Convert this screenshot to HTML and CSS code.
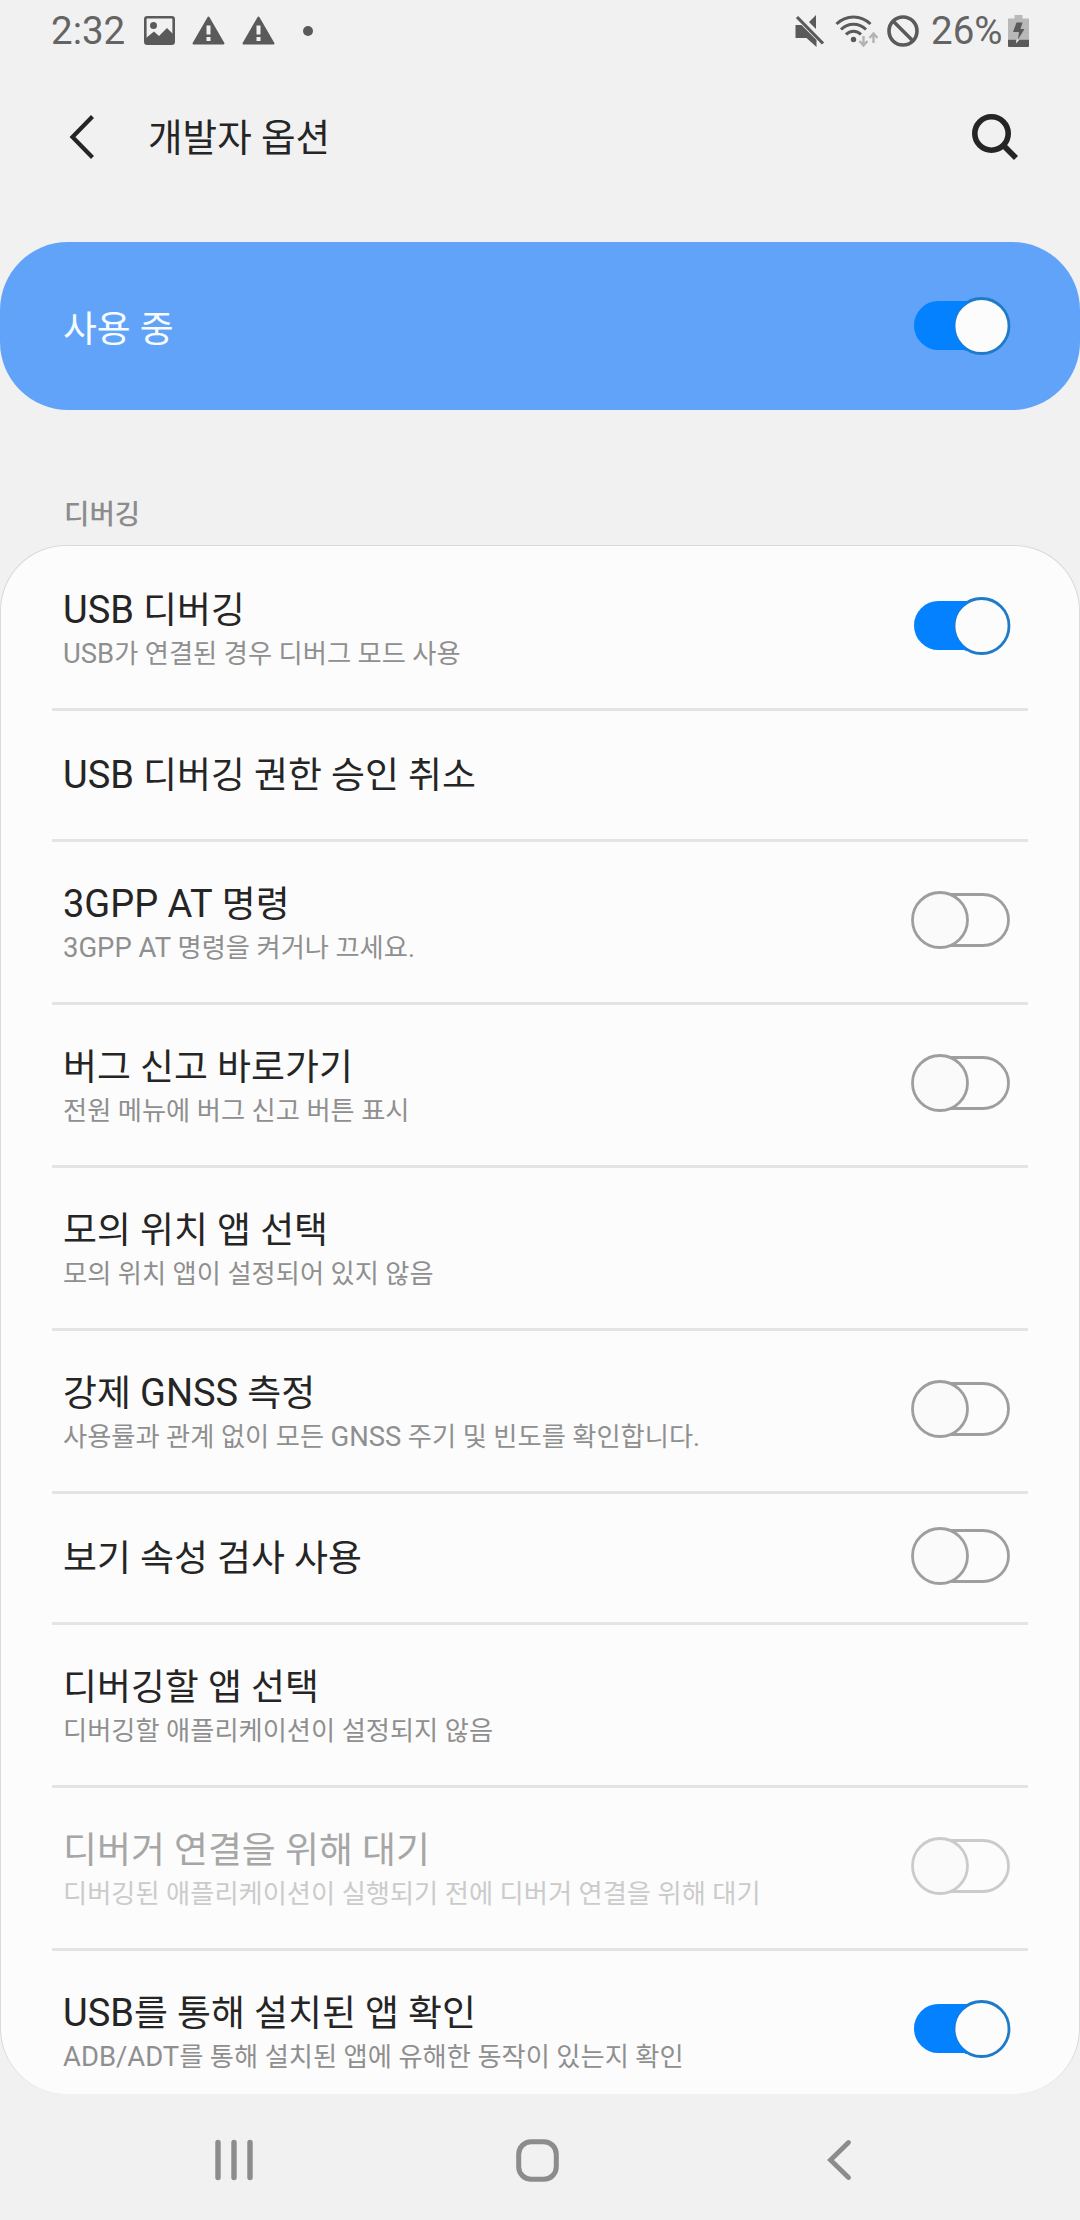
FILE: index.html
```html
<!DOCTYPE html>
<html lang="ko">
<head>
<meta charset="utf-8">
<title>개발자 옵션</title>
<link rel="stylesheet" href="styles.css">
</head>
<body>
<svg class="defs" width="0" height="0" aria-hidden="true">
  <symbol id="switch-on" viewBox="0 0 100 58">
    <rect x="3" y="4" width="90" height="49" rx="24.500" fill="#0381fe"/>
    <circle cx="70.500" cy="29" r="27.500" fill="#fcfcfc" stroke="#1f7bc8" stroke-width="2.800"/>
    <path d="M56 5 A27.500 27.500 0 0 0 56 53" fill="none" stroke="#0381fe" stroke-width="3"/>
  </symbol>
  <symbol id="switch-off" viewBox="0 0 100 58">
    <rect x="8" y="3.500" width="89.500" height="51" rx="25.500" fill="#fcfcfc" stroke="currentColor" stroke-width="2.800"/>
    <circle cx="29" cy="29" r="27.500" fill="#fafafa" stroke="currentColor" stroke-width="2.800"/>
  </symbol>
  <symbol id="warning" viewBox="0 0 33 29">
    <path d="M16.500 1.500 31.500 27.500H1.500Z" fill="#5a5a5a" stroke="#5a5a5a" stroke-width="2" stroke-linejoin="round"/>
    <path d="M14.500 9.500h4v9h-4zM14.500 21h4v4h-4z" fill="#f1f1f1"/>
  </symbol>
</svg>

<header class="status">
  <div class="status-side">
    <span class="clock">2:32</span>
    <svg width="31" height="29" viewBox="0 0 31 29">
      <rect x="1.300" y="1.300" width="28.400" height="26.400" rx="2" fill="none" stroke="#5a5a5a" stroke-width="2.600"/>
      <circle cx="9.500" cy="9.500" r="3.500" fill="#5a5a5a"/>
      <path d="M2 22 10 15.500 15 20 23 12 29 18V28H2Z" fill="#5a5a5a"/>
    </svg>
    <svg class="warn" width="33" height="29"><use href="#warning"/></svg>
    <svg class="warn" width="33" height="29"><use href="#warning"/></svg>
    <span class="dot"></span>
  </div>
  <div class="status-side">
    <svg width="30" height="32" viewBox="0 0 30 32">
      <path d="M0.500 10h6l15 15v7l-10-9h-11zM14 7l7-7v14z" fill="#5a5a5a"/>
      <path d="M4 0 30 26.500" stroke="#f1f1f1" stroke-width="2.500"/>
      <path d="M2 2 28 28.500" stroke="#5a5a5a" stroke-width="3.200"/>
    </svg>
    <svg class="wifi" width="43" height="34" viewBox="0 0 43 34">
      <g fill="none" stroke="#5a5a5a" stroke-width="3">
        <path d="M1.500 10C11 .5 26 .5 35.500 10"/>
        <path d="M6 15.500C13 8.500 24 8.500 31 15.500"/>
        <path d="M11 20.500C15 16 22 16 26 20.500"/>
      </g>
      <circle cx="18.500" cy="25.500" r="2.700" fill="#5a5a5a"/>
      <g fill="none" stroke="#b3b3b3" stroke-width="2.400">
        <path d="M28.500 22v9M24.500 27l4 4.500 4-4.500"/>
        <path d="M38.500 29v-9M34.500 24l4-4.500 4 4.500"/>
      </g>
    </svg>
    <svg class="no-signal" width="32" height="32" viewBox="0 0 32 32">
      <circle cx="16" cy="16" r="14" fill="none" stroke="#5a5a5a" stroke-width="3.600"/>
      <path d="M6 6 26 26" stroke="#5a5a5a" stroke-width="3.600"/>
    </svg>
    <span class="percent">26%</span>
    <svg class="battery" width="21" height="32" viewBox="0 0 21 32">
      <path d="M6.500 0h8v3.500H21V24H0V3.500h6.500z" fill="#b9b9b9"/>
      <path d="M0 24.500h21V31q0 1-1 1H1q-1 0-1-1z" fill="#5a5a5a"/>
      <path d="M8.500 7.500h6l-2 6.500h4L10 24.500l1-7.500H5z" fill="#5a5a5a"/>
      <path d="M8.500 24.500h3l-3.500 4z" fill="#f1f1f1"/>
    </svg>
  </div>
</header>

<div class="appbar">
  <svg class="back" width="26" height="44" viewBox="0 0 26 44"><path d="M23.500 1.500 3.500 22l20 20.500" fill="none" stroke="#252525" stroke-width="4.200"/></svg>
  <h1 class="appbar-title">개발자 옵션</h1>
  <svg class="search" width="48" height="48" viewBox="0 0 48 48"><circle cx="20.500" cy="20.500" r="16.700" fill="none" stroke="#252525" stroke-width="5.600"/><path d="M32 32 45 45" stroke="#252525" stroke-width="5.800"/></svg>
</div>

<main>
  <section class="master">
    <span class="master-label">사용 중</span>
    <svg class="switch"><use href="#switch-on"/></svg>
  </section>

  <h2 class="section-label">디버깅</h2>

  <ul class="card">
    <li class="row">
      <div class="text"><p class="title"><span class="latin">USB</span> 디버깅</p><p class="summary"><span class="latin">USB</span>가 연결된 경우 디버그 모드 사용</p></div>
      <svg class="switch"><use href="#switch-on"/></svg>
    </li>
    <li class="row row-single">
      <div class="text"><p class="title"><span class="latin">USB</span> 디버깅 권한 승인 취소</p></div>
    </li>
    <li class="row">
      <div class="text"><p class="title"><span class="latin">3GPP AT</span> 명령</p><p class="summary"><span class="latin">3GPP AT</span> 명령을 켜거나 끄세요.</p></div>
      <svg class="switch"><use href="#switch-off"/></svg>
    </li>
    <li class="row">
      <div class="text"><p class="title">버그 신고 바로가기</p><p class="summary">전원 메뉴에 버그 신고 버튼 표시</p></div>
      <svg class="switch"><use href="#switch-off"/></svg>
    </li>
    <li class="row">
      <div class="text"><p class="title">모의 위치 앱 선택</p><p class="summary">모의 위치 앱이 설정되어 있지 않음</p></div>
    </li>
    <li class="row">
      <div class="text"><p class="title">강제 <span class="latin">GNSS</span> 측정</p><p class="summary">사용률과 관계 없이 모든 <span class="latin">GNSS</span> 주기 및 빈도를 확인합니다.</p></div>
      <svg class="switch"><use href="#switch-off"/></svg>
    </li>
    <li class="row row-single">
      <div class="text"><p class="title">보기 속성 검사 사용</p></div>
      <svg class="switch"><use href="#switch-off"/></svg>
    </li>
    <li class="row">
      <div class="text"><p class="title">디버깅할 앱 선택</p><p class="summary">디버깅할 애플리케이션이 설정되지 않음</p></div>
    </li>
    <li class="row row-disabled">
      <div class="text"><p class="title">디버거 연결을 위해 대기</p><p class="summary">디버깅된 애플리케이션이 실행되기 전에 디버거 연결을 위해 대기</p></div>
      <svg class="switch"><use href="#switch-off"/></svg>
    </li>
    <li class="row">
      <div class="text"><p class="title"><span class="latin">USB</span>를 통해 설치된 앱 확인</p><p class="summary"><span class="latin">ADB/ADT</span>를 통해 설치된 앱에 유해한 동작이 있는지 확인</p></div>
      <svg class="switch"><use href="#switch-on"/></svg>
    </li>
  </ul>
</main>

<nav class="navbar">
  <svg width="40" height="42" viewBox="0 0 40 42"><path d="M4 3.500v35M20 3.500v35M36 3.500v35" stroke="#8c8c8c" stroke-width="5.400" stroke-linecap="round"/></svg>
  <svg class="home" width="43" height="43" viewBox="0 0 43 43"><rect x="2.700" y="2.700" width="37.600" height="37.600" rx="12.500" fill="none" stroke="#8c8c8c" stroke-width="5"/></svg>
  <svg width="25" height="42" viewBox="0 0 25 42"><path d="M21.500 3.500 3.500 21l18 17.500" fill="none" stroke="#8c8c8c" stroke-width="4.800" stroke-linecap="round"/></svg>
</nav>
</body>
</html>
```

FILE: styles.css
```css
* {
  box-sizing: border-box;
}

body {
  margin: 0;
  width: 1080px;
  height: 2220px;
  overflow: hidden;
  display: flex;
  flex-direction: column;
  background: #f1f1f1;
  color: #252525;
  font-family: Roboto, "Noto Sans CJK KR", sans-serif;
}

h1, h2, p, ul {
  margin: 0;
  padding: 0;
  font-weight: 400;
}

svg {
  display: block;
  flex: none;
}

.defs {
  position: absolute;
}

/* Status bar */
.status {
  height: 61px;
  flex: none;
  display: flex;
  justify-content: space-between;
  padding: 0 51px;
  color: #646464;
  font-size: 38.5px;
  line-height: 66px;
}

.status-side {
  display: flex;
  align-items: center;
}

.clock {
  width: 92.5px;
}

.warn {
  margin-left: 17px;
}

.dot {
  width: 10px;
  height: 10px;
  margin-left: 28px;
  border-radius: 50%;
  background: #5a5a5a;
}

.wifi {
  margin-left: 10px;
}

.no-signal {
  margin-left: 9px;
}

.percent {
  width: 77px;
  margin-left: 12px;
}

/* Title bar */
.appbar {
  height: 181px;
  flex: none;
  display: flex;
  align-items: center;
  padding: 0 61px 30px 69px;
}

.appbar-title {
  flex: 1;
  margin-left: 53px;
  padding-top: 3px;
  font-size: 37.6px;
  line-height: 50px;
}

/* Master switch */
.master {
  height: 168px;
  display: flex;
  align-items: center;
  justify-content: space-between;
  padding: 0 69px 0 63px;
  border-radius: 68px;
  background: #62a3fa;
  color: #f6fcff;
}

.master-label {
  padding-top: 7px;
  font-size: 36.8px;
  line-height: 50px;
}

.switch {
  width: 100px;
  height: 58px;
  color: #9e9e9e;
}

.section-label {
  padding: 86px 64px 11px;
  color: #8c8c8c;
  font-size: 27.6px;
  font-weight: 500;
  line-height: 38px;
}

/* Settings list */
.card {
  height: 1549px;
  overflow: hidden;
  padding-top: 2px;
  list-style: none;
  border: 1px solid #dadada;
  border-bottom: 0;
  border-radius: 66px;
  background: #fcfcfc;
}

.row {
  height: 163px;
  display: flex;
  align-items: center;
  justify-content: space-between;
  margin: 0 51px;
  padding: 0 17px 4px 11px;
  border-bottom: 3px solid #e4e4e4;
}

.row:last-child {
  height: 160px;
  border-bottom: 0;
}

.row-single {
  height: 131px;
}

.text {
  padding-top: 6px;
}

.title {
  font-size: 36.9px;
  line-height: 50px;
}

.summary {
  color: #8f8f8f;
  font-size: 26.25px;
  line-height: 37px;
}

/* Latin runs are set slightly larger than the Hangul around them */
.latin {
  font-size: 1.03em;
  line-height: 1;
}

.summary .latin {
  font-size: 1.045em;
}

.row-disabled .title {
  color: #a6a6a6;
}

.row-disabled .summary {
  color: #cbcbcb;
}

.row-disabled .switch {
  color: #cbcbcb;
}

/* System navigation */
.navbar {
  flex: 1;
  display: flex;
  align-items: center;
  justify-content: space-between;
  padding: 6px 228px 0 214px;
}

.home {
  margin-right: 7px;
}
```
